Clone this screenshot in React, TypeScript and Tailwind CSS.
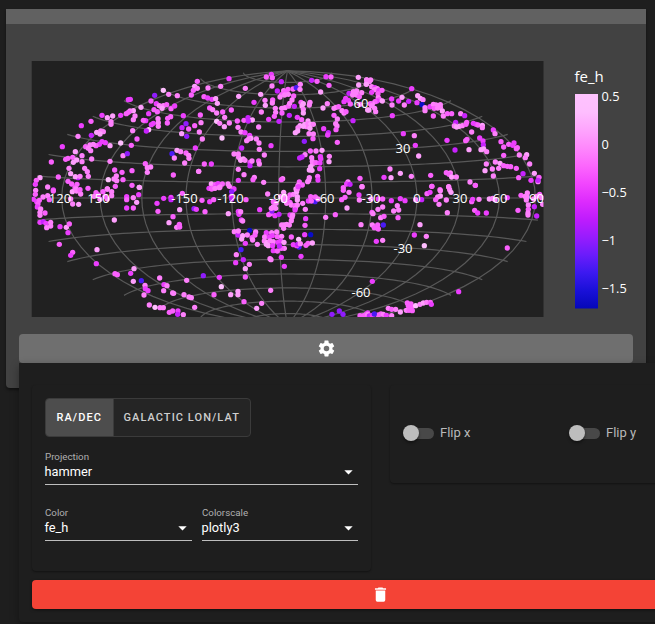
import React from "react";

const SHADES: Record<string, string> = {
  a: "#febefe",
  b: "#fe9ffd",
  c: "#fe80fc",
  d: "#fa60fd",
  e: "#ec3efe",
  f: "#c722fd",
  g: "#901cfd",
  h: "#4a1af5",
  i: "#0a0cc8",
};

type Patch = { x: number; y: number; stars: string };

// Stars grouped by sky patch; each entry is "x,y,shade" in thirds of a pixel.
const PATCHES: Patch[] = [
  {
    x: 20,
    y: 55,
    stars:
      "532,79,d 524,94,b 520,106,d 532,100,c 514,120,d 430,106,a 446,118,c 472,122,c 404,121,g 325,134,e 331,133,e 393,138,d 409,146,e 363,157,b 340,167,b 330,168,c 325,172,d 319,176,d 418,152,c 430,152,c 440,149,d 426,160,b 402,164,d 412,170,d 453,161,d 464,153,e 386,176,e 345,183,c 340,194,c 302,181,e 278,183,b 246,181,e 262,188,b 213,199,d 273,200,c 273,208,c 184,212,e 377,197,e 370,196,d 414,191,c 415,203,c 415,214,c 400,205,e 394,209,e 386,224,a 379,228,f 443,190,d 452,185,d 442,204,d 490,182,e 498,206,g 486,218,f 506,222,d 524,212,d 485,236,b 500,244,g 174,244,c 214,241,f 230,232,b 242,228,c 250,230,c 240,237,b 538,231,c 338,227,c 351,252,d 334,271,d 302,264,a 309,302,c 322,296,g 127,275,e 270,272,b 256,263,e 246,260,e 238,268,e 228,272,d 220,268,c 210,270,c 197,275,d 205,280,c 212,287,c 215,312,c 166,290,b 186,302,c 144,310,d 137,313,d 158,307,d 170,315,b 160,322,b 186,320,c 147,340,c 94,321,d 152,356,b 194,340,c 202,350,c 205,364,c 174,368,f 166,365,b 180,364,c 270,319,c 376,326,d 382,338,c 392,336,c 382,352,c 456,296,h 471,286,b 482,290,c 498,294,d 506,301,c 507,310,c 463,309,c 494,324,c 526,279,e 460,360,d 536,349,c 284,345,d 306,352,d 336,347,d 289,363,c 282,372,c 265,374,a 290,377,c 309,374,d 336,391,d 358,397,a 286,394,d 262,402,b 60,368,b 49,376,d 46,388,e 83,396,c 115,366,d 144,379,d 155,387,d 171,388,d 165,398,d 204,400,d 100,405,e",
  },
  {
    x: 190,
    y: 55,
    stars:
      "54,99,c 92,94,c 117,71,e 166,100,c 42,125,d 53,129,e 66,133,e 77,131,b 82,145,b 146,124,b 212,118,b 192,142,e 59,159,d 68,164,c 80,174,c 98,171,d 124,165,d 104,187,c 31,180,d 33,203,c 80,199,a 89,205,c 103,215,b 118,204,c 37,252,c 96,249,a 142,198,d 162,196,d 174,188,f 187,195,b 175,198,f 144,217,c 206,216,c 153,231,c 165,233,e 179,241,e 183,250,b 170,257,c 176,252,c 199,252,c 207,264,c 243,272,e 208,283,c 155,279,f 223,300,c 132,297,c 145,297,c 146,307,c 152,316,b 160,312,b 165,316,c 180,322,e 180,332,f 186,318,c 206,318,d 208,327,c 43,327,d 64,327,e 26,349,c 145,343,c 162,359,c 145,376,e 193,367,c 189,374,d 221,382,c 278,371,c 274,374,d 64,387,b 76,389,d 84,386,e 97,387,d 114,387,c 65,399,c 75,398,e 88,398,c 132,402,e 229,66,d 244,58,e 247,68,d 246,93,c 274,80,f 262,108,f 281,107,c 285,110,d 294,103,d 309,102,d 319,98,h 331,88,c 330,103,c 275,119,d 270,126,c 284,120,c 295,118,c 311,123,d 306,135,c 248,135,d 247,144,c 225,136,c 226,151,b 214,171,c 256,160,c 257,172,c 236,193,e 253,184,d 275,160,c 276,174,d 285,158,c 296,153,d 267,199,f 298,181,f 313,154,f 299,145,c 333,142,d 340,146,b 336,153,b 340,163,c 340,174,b 322,187,e 335,194,d 360,142,c 358,150,c 365,76,f 381,79,d 408,65,e 423,66,d 417,91,d 392,111,b 412,146,c 399,159,b 432,160,c 438,157,c 446,155,d 432,181,d 442,192,c 437,206,c 441,213,c 438,224,d 401,221,e 415,233,f 413,240,e 442,262,d 489,197,f 505,67,b 506,90,b 529,87,d 530,75,b 538,80,c 477,115,f 490,110,c 500,108,c 515,113,c 500,120,c 488,120,c 467,130,e 475,136,e 462,140,e 481,147,d 456,167,c 462,174,c 468,170,d 510,148,d 508,125,d 533,165,b 354,198,b 344,208,b 354,206,c 362,208,b 370,208,c 350,215,c 330,212,b 340,214,b 324,218,c 360,220,b 323,228,b 316,233,b 357,236,c 370,237,c 369,251,d 343,259,g 361,288,d 378,288,c 396,286,b 345,299,c 336,306,f 329,309,f 418,304,c 417,320,b 391,305,e 392,311,e 365,308,c 367,319,c 368,326,c 378,323,d 390,324,e 389,341,e 362,335,b 358,345,b 366,346,b 383,364,d 384,375,e 358,368,c 356,376,c 328,381,d 324,391,c 337,390,d 318,402,b 353,380,c 474,381,c 470,387,e 480,388,f 510,370,d 516,395,c 460,398,d",
  },
  {
    x: 365,
    y: 55,
    stars:
      "5,75,c 17,75,c 4,88,b 20,95,c 30,98,e 28,104,c 37,101,c 42,106,e 51,106,d 20,112,e 39,116,d 40,128,c 44,134,d 36,138,e 52,138,b 30,140,d 22,147,c 16,146,d 29,160,c 32,170,c 12,165,b 20,152,c 80,132,e 81,150,c 101,138,e 111,127,b 118,150,c 131,139,f 140,101,e 158,122,b 166,130,b 174,134,c 156,143,e 171,149,i 180,158,c 180,167,c 195,155,e 205,148,c 213,150,c 226,149,c 208,160,d 218,159,c 226,157,c 232,168,b 205,183,d 235,183,c 247,176,d 260,176,d 287,176,c 299,182,f 82,182,e 272,202,f 268,213,c 275,216,b 283,214,b 292,212,c 303,208,d 305,202,d 325,205,e 333,208,e 339,210,d 352,211,b 352,218,c 320,231,c 385,225,e 390,236,c 115,236,e 148,242,c 151,271,e 161,303,b 246,256,e 302,257,d 306,253,d 270,285,f 312,284,b 344,249,e 354,258,e 355,270,f 348,284,b 356,282,b 365,290,c 408,260,d 416,276,d 431,268,d 443,271,e 447,264,e 457,278,d 454,281,d 416,301,d 463,300,c 485,299,b 481,308,c 494,327,c 508,355,b 474,356,f 461,368,d 498,376,e 522,367,d 519,380,c 519,376,f 364,327,c 360,347,b 391,321,c 405,325,b 382,342,c 401,340,c 416,332,d 427,334,d 437,335,d 454,340,d 385,363,c 315,381,c 331,391,d 75,342,c 57,367,e 78,368,b 106,355,b 139,364,c 197,361,d 244,353,d 256,354,c 252,358,d 260,366,b 274,366,c 200,394,c 251,396,c 225,404,d",
  },
  {
    x: 20,
    y: 185,
    stars:
      "47,16,c 40,43,e 46,28,d 69,36,c 83,32,c 100,18,d 50,50,e 54,57,d 52,66,e 58,46,d 62,72,c 60,82,c 60,91,c 75,84,d 60,112,e 70,110,f 78,115,e 92,112,c 92,123,c 80,128,c 120,125,e 139,127,b 148,117,d 144,143,e 118,178,d 158,202,d 152,211,e 231,194,b 229,236,e 342,251,b 332,265,e 340,289,b 364,287,h 285,266,d 292,269,d 375,301,c 376,311,e 384,317,e 372,330,c 419,279,c 432,299,e 441,302,c 431,317,c 458,324,c 461,325,c 492,329,c 507,336,c 514,338,c 500,286,c 388,360,c 405,367,a 420,368,c 430,368,c 524,367,c 448,382,d 458,378,d 474,378,e 473,388,f 490,389,c 283,105,b 157,20,b 168,12,c 170,18,c 182,27,c 158,57,c 176,58,b 152,42,c 88,44,d 180,14,d 228,23,d 222,34,c 249,20,d 262,12,c 275,20,c 275,32,c 240,43,c 262,42,c 255,34,d 235,30,d 320,35,e 320,44,d 320,69,e 340,69,d 340,38,c 356,29,e 350,52,b 358,7,b 411,55,e 414,79,d 431,40,e 453,37,e 453,44,f 487,25,d 459,95,d 479,74,b 447,113,b 470,127,c 478,118,d 479,126,d 522,71,g 529,73,e",
  },
  {
    x: 190,
    y: 185,
    stars:
      "57,10,e 65,12,d 75,10,c 90,6,c 130,12,e 125,20,g 118,4,c 124,34,e 125,42,f 36,46,d 59,50,e 71,44,d 168,44,d 233,27,c 45,80,d 115,86,b 145,79,e 147,88,e 152,80,c 154,105,e 158,108,c 209,74,e 179,136,i 133,140,c 144,150,f 145,138,c 158,152,b 155,162,b 172,150,c 186,158,d 197,141,c 195,150,d 188,165,c 202,178,c 166,175,e 153,194,h 139,209,c 160,224,f 137,233,e 178,238,c 166,251,b 166,276,d 40,272,g 88,277,e 94,305,a 72,329,d 122,329,b 144,319,b 144,329,b 162,350,d 200,370,b 215,355,c 242,316,c 240,221,c 243,224,c 274,217,e 283,244,e 333,214,e 245,143,c 229,143,e 260,141,c 224,156,c 238,156,e 247,152,e 262,155,d 275,154,c 223,168,c 232,172,b 240,168,c 235,182,b 229,178,b 250,170,c 264,172,e 272,168,e 282,172,b 283,190,c 248,182,e 274,190,d 250,197,e 262,198,d 268,183,f 304,156,d 326,163,a 327,186,h 310,179,e 320,182,e 323,178,f 331,176,c 344,149,e 362,149,i 354,175,d 367,174,b 348,181,d 345,121,d 347,101,e 346,73,c 407,97,c 436,89,d 471,69,b 513,119,c 282,120,b 275,120,c 290,118,c 298,120,c 281,130,c 300,90,e 308,90,c 306,97,c 304,107,c 236,89,d 242,86,d 255,92,e 267,88,f 246,78,g 244,70,c 250,65,c 257,70,c 250,50,d 258,55,c 272,35,c 281,22,b 283,32,b 292,40,d 280,45,c 290,55,c 300,52,d 304,60,c 315,62,d 316,70,c 322,60,c 315,75,e 300,30,d 310,28,c 320,20,b 322,12,c 325,5,e 322,35,b 322,45,b 338,55,c 355,48,e 362,35,d 375,50,h 364,48,d 376,36,d 384,42,c 455,44,d 465,37,d 460,16,d 477,22,c 507,30,e 516,5,c 508,45,c 426,388,g 448,378,g 459,388,g 510,392,d 520,392,d 528,388,d 533,384,e",
  },
  {
    x: 365,
    y: 185,
    stars:
      "18,42,c 40,42,e 53,42,d 39,73,c 53,66,c 21,82,d 24,86,c 47,98,c 57,94,d 79,47,e 97,62,c 86,78,c 101,75,c 99,98,d 106,41,e 120,47,e 152,44,c 170,44,f 186,26,d 195,22,e 201,4,d 226,17,c 226,33,b 218,36,c 212,44,d 222,58,c 244,45,c 247,83,c 251,5,c 254,14,c 258,22,b 331,1,d 320,50,d 323,43,e 342,43,c 373,42,b 383,40,c 390,44,c 427,38,e 329,76,d 338,84,e 364,84,e 22,120,c 28,128,d 38,120,d 40,132,d 55,120,h 165,119,b 148,150,e 184,154,c 178,182,a 34,169,e 53,166,c 427,189,d 281,320,e 22,289,e 459,76,d 468,31,d 480,34,c 487,24,c 486,35,c 484,45,c 490,60,c 490,73,d 489,84,c 489,90,c 506,42,c 508,65,f 515,93,f 524,28,d 530,38,c 515,34,c 533,58,c 8,388,c 13,393,f 22,391,e 40,390,d 28,387,h 48,387,d 55,388,c 64,391,e 80,392,c 70,370,c 80,373,d 92,373,c 106,381,b 127,354,d 130,362,d 138,357,d 124,376,c 132,376,d 142,377,d 140,366,d 152,362,a 165,358,c 175,354,b 185,352,c 196,352,d 199,358,e",
  },
];

const CX = 287.5;
const CY = 198;
const R = 89.9;
const CENTER_LON = -84.4;

// Hammer projection; lam is measured from the central meridian, in degrees.
function hammer(lam: number, phi: number): string {
  const l = (lam * Math.PI) / 360;
  const p = (phi * Math.PI) / 180;
  const d = Math.sqrt(1 + Math.cos(p) * Math.cos(l));
  const x = (R * 2 * Math.SQRT2 * Math.cos(p) * Math.sin(l)) / d;
  const y = (R * Math.SQRT2 * Math.sin(p)) / d;
  return `${(CX + x).toFixed(2)},${(CY - y).toFixed(2)}`;
}

function range(from: number, to: number, step: number): number[] {
  const out: number[] = [];
  for (let v = from; v <= to; v += step) out.push(v);
  return out;
}

const PARALLELS = range(-80, 80, 10).map((phi) =>
  range(-180, 180, 5).map((lam) => hammer(lam, phi)).join(" ")
);
const MERIDIANS = range(-180, 150, 30).map((lon) => {
  const lam = ((lon - CENTER_LON + 540) % 360) - 180;
  return range(-90, 90, 5).map((phi) => hammer(lam, phi)).join(" ");
});

const SKY_LABELS: [number, number, string][] = [
  [60, 203, "120"],
  [98.5, 203, "150"],
  [184.5, 203, "-150"],
  [230.5, 203, "-120"],
  [278.5, 203, "-90"],
  [325, 203, "-60"],
  [371, 203, "-30"],
  [417, 203, "0"],
  [460, 203, "30"],
  [500, 203, "60"],
  [536.5, 203, "90"],
  [361, 108, "60"],
  [403, 153, "30"],
  [403, 253, "-30"],
  [361, 297, "-60"],
];

const BAR_TICKS: [number, string][] = [
  [101, "0.5"],
  [149, "0"],
  [197, "−0.5"],
  [245, "−1"],
  [293, "−1.5"],
];

const BAR_COLORS = [
  "#fec3fe", "#febefe", "#fea5fd", "#fe88fc", "#fc67fd", "#f246fe", "#dd2bfd",
  "#bf1cfd", "#981cfd", "#6b1cfb", "#3c19f0", "#1910d8", "#0508b8",
];

function SkyMap() {
  return (
    <svg
      className="block h-[310px] w-[640px] shrink-0 font-['Open_Sans','Noto_Sans',sans-serif]"
      viewBox="6 24 640 310"
    >
      <defs>
        <linearGradient id="scale" x1="0" y1="0" x2="0" y2="1">
          {BAR_COLORS.map((c, i) => (
            <stop key={c} offset={i / (BAR_COLORS.length - 1)} stopColor={c} />
          ))}
        </linearGradient>
        <clipPath id="frame">
          <rect x="31.7" y="61" width="511.8" height="256" />
        </clipPath>
      </defs>
      <rect x="31.7" y="61" width="511.8" height="256" fill="#212121" />
      <g clipPath="url(#frame)">
        <g fill="none" stroke="#585858" strokeWidth="1.2">
          {PARALLELS.map((p, i) => (
            <polyline key={i} points={p} />
          ))}
          {MERIDIANS.map((p, i) => (
            <polyline key={i} points={p} />
          ))}
        </g>
        {PATCHES.map((patch, i) => (
          <g key={i}>
            {patch.stars.split(" ").map((s, j) => {
              const [x, y, c] = s.split(",");
              return (
                <circle
                  key={j}
                  cx={patch.x + Number(x) / 3}
                  cy={patch.y + Number(y) / 3}
                  r="2.65"
                  fill={SHADES[c]}
                />
              );
            })}
          </g>
        ))}
        <g fill="#fff" fontSize="13" textAnchor="middle">
          {SKY_LABELS.map(([x, y, t], i) => (
            <text key={i} x={x} y={y}>
              {t}
            </text>
          ))}
        </g>
      </g>
      <rect x="575" y="94" width="23" height="214.500" fill="url(#scale)" />
      <g fill="#fff" fontSize="12.75">
        <text x="574.5" y="82" fontSize="15">
          fe_h
        </text>
        {BAR_TICKS.map(([y, t]) => (
          <text key={t} x="601.5" y={y}>
            {t}
          </text>
        ))}
      </g>
    </svg>
  );
}

function Select({ label, value, className }: { label: string; value: string; className: string }) {
  return (
    <div className={`h-[34px] border-b border-[#bebebe] ${className}`}>
      <div className="h-[11px] text-[9.75px] leading-[11px] text-[#b0b0b0]">{label}</div>
      <div className="flex h-[20px] items-center justify-between pr-[5px]">
        <span className="-ml-[0.5px] text-[12.8px] leading-[20px] text-white">{value}</span>
        <svg className="h-[5px] w-[9px]" viewBox="0 0 9 5">
          <path d="M0.3 0.3h8.4L4.500 4.500z" fill="#fff" />
        </svg>
      </div>
    </div>
  );
}

function Toggle({ label, className }: { label: string; className: string }) {
  return (
    <div className={`flex items-center ${className}`}>
      <div className="flex h-[11px] w-[30px] items-center rounded-full bg-[#484848]">
        <div className="-ml-[1px] h-4 w-4 shrink-0 rounded-full bg-[#bdbdbd] shadow-[0_2px_3px_rgba(0,0,0,0.4)]" />
      </div>
      <span className="ml-[6px] text-[13px] leading-4 text-[#b9b9b9]">{label}</span>
    </div>
  );
}

export default function App() {
  return (
    <div className="h-[624px] w-[655px] overflow-hidden bg-[#1e1e1e] pl-[6px] pt-[9px] font-[Roboto,sans-serif]">
      <div className="h-[379px] w-[640px] rounded-b bg-[#424242] shadow-[0_2px_3px_rgba(0,0,0,0.45)]">
        <div className="h-[15px] bg-[#616161]" />
        <SkyMap />
        <div className="ml-[13px] w-[723px]">
          <div className="flex h-[29px] w-[614px] items-center justify-center rounded bg-[#6f6f6f]">
            <svg className="h-[19px] w-[19px]" viewBox="0 0 24 24" fill="#fff">
              <path d="M12 15.5A3.5 3.5 0 0 1 8.5 12 3.5 3.5 0 0 1 12 8.5a3.5 3.5 0 0 1 3.5 3.5 3.5 3.5 0 0 1-3.5 3.5m7.43-2.53c.04-.32.07-.64.07-.97s-.03-.66-.07-1l2.11-1.63c.19-.15.24-.42.12-.64l-2-3.46c-.12-.22-.39-.31-.61-.22l-2.49 1c-.52-.39-1.06-.73-1.69-.98l-.37-2.65A.506.506 0 0 0 14 2h-4c-.25 0-.46.18-.5.42l-.37 2.65c-.63.25-1.17.59-1.69.98l-2.49-1c-.22-.09-.49 0-.61.22l-2 3.46c-.13.22-.07.49.12.64L4.57 11c-.04.34-.07.67-.07 1s.03.65.07.97l-2.11 1.66c-.19.15-.25.42-.12.64l2 3.46c.12.22.39.3.61.22l2.49-1.01c.52.4 1.06.74 1.69.99l.37 2.65c.04.24.25.42.5.42h4c.25 0 .46-.18.5-.42l.37-2.65c.63-.26 1.17-.59 1.69-.99l2.49 1.01c.22.08.49 0 .61-.22l2-3.46c.12-.22.07-.49-.12-.64z" />
            </svg>
          </div>
          <div className="h-[259px] rounded-b bg-[#1e1e1e] px-[13px] pt-[22px] shadow-[0_3px_8px_rgba(0,0,0,0.35)]">
            <div className="flex h-[195px] items-start">
              <div className="h-[186px] w-[339px] rounded bg-[#1e1e1e] px-[13px] pt-[13px] shadow-[0_1px_2px_rgba(0,0,0,0.4)]">
                <div className="flex h-[39px] w-[206px] overflow-hidden rounded border border-[#3b3b3b] bg-[#252525] text-[11px] font-medium tracking-[1.06px]">
                  <div className="flex w-[67px] items-center bg-[#4d4d4d] pl-[10.5px] pt-px text-white">RA/DEC</div>
                  <div className="flex flex-1 items-center border-l border-[#3b3b3b] pl-[9.500px] pt-px text-[#cfcfcf]">
                    GALACTIC LON/LAT
                  </div>
                </div>
                <Select label="Projection" value="hammer" className="mt-[14px] w-[313px]" />
                <div className="mt-[22px] flex gap-[10px]">
                  <Select label="Color" value="fe_h" className="w-[147px]" />
                  <Select label="Colorscale" value="plotly3" className="w-[156px]" />
                </div>
              </div>
              <div className="ml-[19px] flex h-[98px] w-[339px] shrink-0 items-center rounded bg-[#1e1e1e] pb-[2px] pl-[14px] shadow-[0_1px_2px_rgba(0,0,0,0.4)]">
                <Toggle label="Flip x" className="w-[166px]" />
                <Toggle label="Flip y" className="w-[120px]" />
              </div>
            </div>
            <div className="flex h-[29px] items-center justify-center rounded bg-[#f44336] shadow-[0_1px_3px_rgba(0,0,0,0.5)]">
              <svg className="h-[19px] w-[19px]" viewBox="0 0 24 24" fill="#fff">
                <path d="M19 4h-3.500l-1-1h-5l-1 1H5v2h14M6 19a2 2 0 0 0 2 2h8a2 2 0 0 0 2-2V7H6z" />
              </svg>
            </div>
          </div>
        </div>
      </div>
    </div>
  );
}
